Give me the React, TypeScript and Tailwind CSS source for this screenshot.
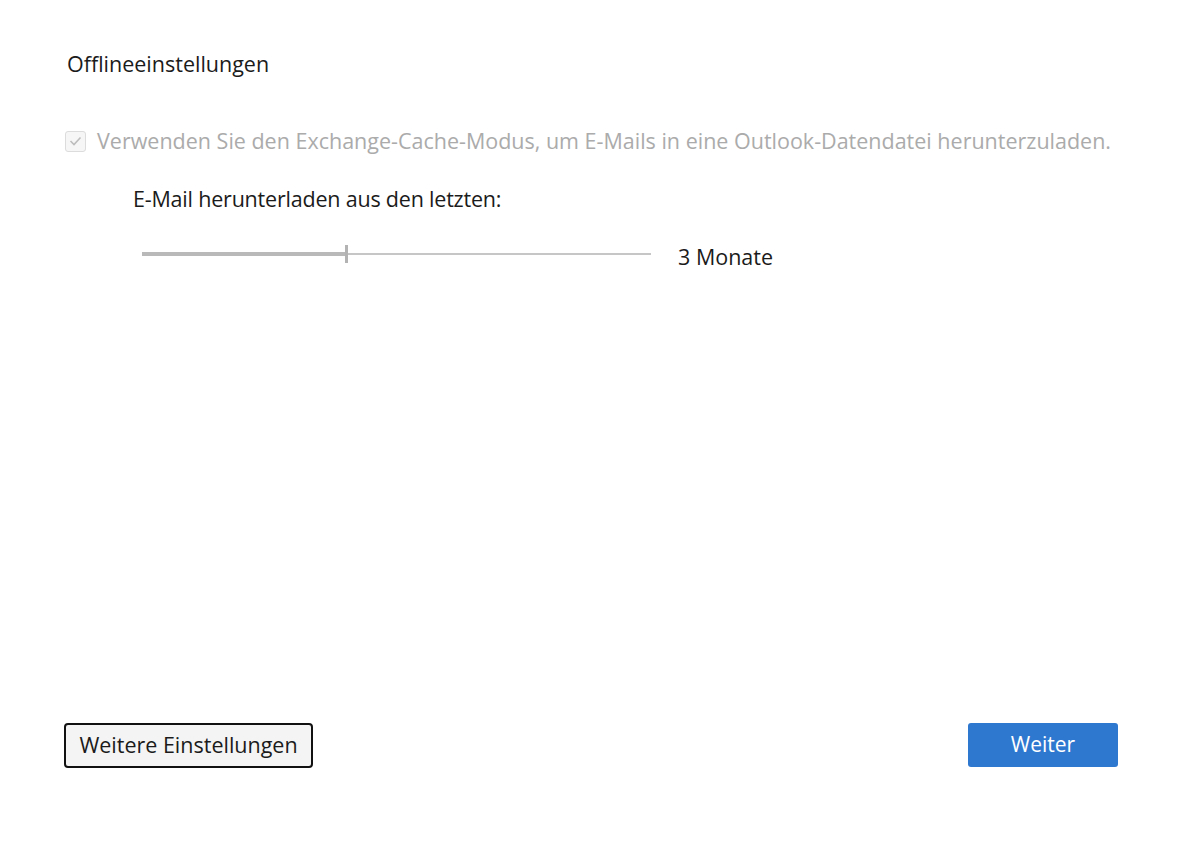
import React from "react";

export default function App() {
  return (
    <div
      className="w-[1200px] h-[845px] bg-white flex flex-col text-[#1b1b1b]"
      style={{ fontFamily: '"Open Sans", "Noto Sans", sans-serif' }}
    >
      <div className="pl-[67px] pt-[50px]">
        <div className="text-[21.5px] leading-[28px]">Offlineeinstellungen</div>
        <div className="mt-[49px] flex items-center">
          <div className="w-[21px] h-[21px] ml-[-2px] rounded-[3px] border border-[#dcdcdc] bg-[#f6f6f6] flex items-center justify-center">
            <svg width="13" height="10" viewBox="0 0 13 10">
              <path d="M1.5 5 L5 8.5 L11.5 1.5" fill="none" stroke="#bdbdbd" strokeWidth="1.6" />
            </svg>
          </div>
          <div className="ml-[11px] text-[21.5px] leading-[28px] text-[#ababab]">
            Verwenden Sie den Exchange-Cache-Modus, um E-Mails in eine Outlook-Datendatei herunterzuladen.
          </div>
        </div>
        <div className="ml-[66px] mt-[30px] text-[21.5px] leading-[28px] tracking-[-0.2px]">
          E-Mail herunterladen aus den letzten:
        </div>
        <div className="ml-[75px] mt-[31px] flex items-start">
          <div className="relative w-[509px] h-[20px] flex items-center">
            <div className="h-[4px] w-[205px] bg-[#b9b9b9]" />
            <div className="h-[2px] flex-1 bg-[#c6c6c6]" />
            <div className="absolute left-[203px] top-[1px] w-[3px] h-[18px] bg-[#b3b3b3]" />
          </div>
          <div className="ml-[27px] mt-[-1px] text-[21.5px] leading-[28px]">3 Monate</div>
        </div>
      </div>
      <div className="flex-1" />
      <div className="flex justify-between pl-[64px] pr-[82px] pb-[77px]">
        <button className="w-[249px] h-[45px] rounded-[4px] border-2 border-[#111] bg-[#f4f4f4] text-[21.5px] text-[#1b1b1b]">
          Weitere Einstellungen
        </button>
        <button className="w-[150px] h-[44px] rounded-[3px] bg-[#2f78d0] text-white text-[21px]">
          Weiter
        </button>
      </div>
    </div>
  );
}
